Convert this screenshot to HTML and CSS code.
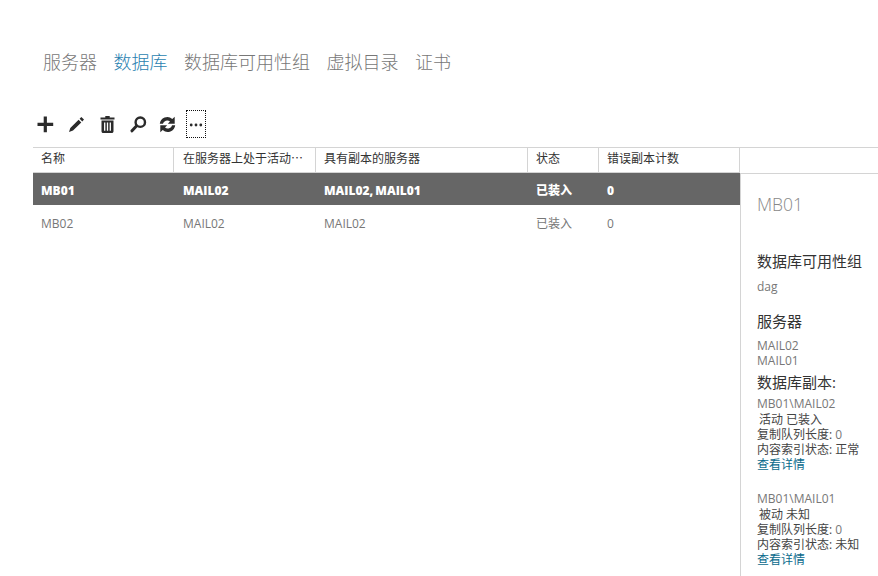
FILE: index.html
```html
<!DOCTYPE html>
<html lang="zh-CN">
<head>
<meta charset="utf-8">
<title>数据库</title>
<link rel="stylesheet" href="styles.css">
</head>
<body>
<nav class="tabs">
  <a class="tab">服务器</a>
  <a class="tab active">数据库</a>
  <a class="tab">数据库可用性组</a>
  <a class="tab">虚拟目录</a>
  <a class="tab">证书</a>
</nav>
<div class="toolbar">
  <button class="tool"><svg width="17" height="17" viewBox="0 0 17 17"><path d="M6.700 .5h3.200v6.300h6.300v3.200H9.900v6.300H6.700V10H.5V6.800h6.200z" fill="#2b2b2b"/></svg></button>
  <button class="tool"><svg width="17" height="17" viewBox="0 0 17 17"><path d="M13.300 1l2.700 2.600-1.700 1.800-2.700-2.700zM10.600 3.700l2.700 2.700-8.300 8.200-4 1.400 1.300-4z" fill="#2b2b2b"/></svg></button>
  <button class="tool"><svg width="17" height="17" viewBox="0 0 17 17"><path d="M6.300 0h4.400v1.500h4.800v2H1.500v-2h4.800zM2.500 4.500h12v10.700c0 1-.7 1.800-1.700 1.800H4.200c-1 0-1.700-.8-1.700-1.800z" fill="#2b2b2b"/><path d="M5.700 6.500v8.300M8.500 6.500v8.300M11.300 6.500v8.300" stroke="#fff" stroke-width="1.300"/></svg></button>
  <button class="tool"><svg width="17" height="17" viewBox="0 0 17 17"><circle cx="10.300" cy="6.200" r="4.700" fill="none" stroke="#2b2b2b" stroke-width="2.400"/><path d="M6.700 9.800L2 14.800" stroke="#2b2b2b" stroke-width="3" stroke-linecap="round"/></svg></button>
  <button class="tool refresh"><svg width="17" height="17" viewBox="0 0 17 17"><path d="M.8 7.800A7.500 7.500 0 0 1 13.300 3L15.700 .8v7H8.800l2.200-2.300A4.400 4.400 0 0 0 3.900 7.800z" fill="#2b2b2b"/><path d="M16.200 9.200A7.500 7.500 0 0 1 3.700 14L1.300 16.200v-7h6.900L6 11.500A4.400 4.400 0 0 0 13.100 9.200z" fill="#2b2b2b"/></svg></button>
  <button class="tool more"><svg width="14" height="4" viewBox="0 0 14 4"><circle cx="2.200" cy="2" r="1.400" fill="#2b2b2b"/><circle cx="7" cy="2" r="1.400" fill="#2b2b2b"/><circle cx="11.800" cy="2" r="1.400" fill="#2b2b2b"/></svg></button>
</div>
<main class="content">
  <section class="list">
    <div class="row head">
      <div class="cell">名称</div>
      <div class="cell">在服务器上处于活动⋯</div>
      <div class="cell">具有副本的服务器</div>
      <div class="cell">状态</div>
      <div class="cell">错误副本计数</div>
    </div>
    <div class="row selected">
      <div class="cell">MB01</div>
      <div class="cell">MAIL02</div>
      <div class="cell">MAIL02, MAIL01</div>
      <div class="cell">已装入</div>
      <div class="cell">0</div>
    </div>
    <div class="row item">
      <div class="cell">MB02</div>
      <div class="cell">MAIL02</div>
      <div class="cell">MAIL02</div>
      <div class="cell">已装入</div>
      <div class="cell">0</div>
    </div>
  </section>
  <aside class="side">
    <div class="side-head"></div>
    <div class="details">
      <h1 class="title">MB01</h1>
      <h2 class="label dag-label">数据库可用性组</h2>
      <p class="muted dag">dag</p>
      <h2 class="label">服务器</h2>
      <p class="muted servers">MAIL02<br>MAIL01</p>
      <h2 class="label copies">数据库副本:</h2>
      <div class="copy">
        <p class="muted">MB01\MAIL02</p>
        <p class="line indent">活动 已装入</p>
        <p class="line">复制队列长度: <span class="muted">0</span></p>
        <p class="line">内容索引状态: 正常</p>
        <a class="link">查看详情</a>
      </div>
      <div class="copy">
        <p class="muted">MB01\MAIL01</p>
        <p class="line indent">被动 未知</p>
        <p class="line">复制队列长度: <span class="muted">0</span></p>
        <p class="line">内容索引状态: 未知</p>
        <a class="link">查看详情</a>
      </div>
    </div>
  </aside>
</main>
</body>
</html>
```
FILE: styles.css
```css
* { box-sizing: border-box; }
html, body { margin: 0; height: 100%; overflow: hidden; }
body {
  background: #fff;
  color: #333;
  font-family: "Open Sans", "Noto Sans CJK SC", sans-serif;
  font-size: 12px;
  width: 878px;
  height: 576px;
  display: flex;
  flex-direction: column;
}
p, h1, h2 { margin: 0; font-weight: 400; }
.tabs {
  display: flex;
  gap: 16.5px;
  padding: 50px 0 0 43px;
  height: 110px;
  font-size: 18px;
  line-height: 25px;
  font-weight: 300;
  color: #777;
}
.tab.active { color: #2a7fb0; }
.toolbar {
  display: flex;
  align-items: center;
  padding-left: 37px;
  height: 28px;
  gap: 14px;
}
.tool {
  width: 17px;
  height: 17px;
  padding: 0;
  border: 0;
  background: none;
  display: flex;
  align-items: center;
  justify-content: center;
}
.refresh { margin-left: -2px; }
.more {
  width: 20px;
  height: 28px;
  border: 1px dotted #111;
  margin-left: -4px;
  padding-top: 2px;
}
.content { display: flex; flex: 1; min-height: 0; margin-top: 9px; padding-left: 33px; }
.list { width: 707px; }
.row {
  display: grid;
  grid-template-columns: 141px 142px 212px 71px 141px;
}
.cell { padding-left: 8px; white-space: nowrap; overflow: hidden; }
.cell:nth-child(2) { padding-left: 9px; }
.head {
  height: 26px;
  border-top: 1px solid #d4d4d4;
  border-bottom: 1px solid #d4d4d4;
  line-height: 21px;
  color: #333;
}
.head .cell { border-right: 1px solid #d4d4d4; }
.selected {
  height: 32px;
  background: #666;
  color: #fff;
  font-weight: 800;
  line-height: 35px;
}
.selected .cell:nth-child(3) { word-spacing: -1px; }
.item { height: 36px; line-height: 37px; color: #777; }
.side { flex: 1; min-width: 0; }
.side-head { height: 27px; border-top: 1px solid #d4d4d4; border-bottom: 1px solid #d4d4d4; }
.details {
  height: 402px;
  padding: 18px 0 0 16px;
  border-left: 1px solid #d4d4d4;
  overflow: hidden;
  white-space: nowrap;
}
.title { font-size: 17.5px; line-height: 25px; color: #888; font-weight: 300; }
.label { font-size: 15px; line-height: 20px; color: #333; }
.dag-label { margin-top: 34px; }
.muted { color: #777; }
.dag { margin-top: 8px; line-height: 16px; margin-bottom: 16px; }
.servers { margin-top: 7px; line-height: 15px; }
.copies { margin-top: 4px; }
.copy { margin-top: 4px; margin-bottom: 19px; line-height: 15px; }
.copy > .muted { line-height: 16px; }
.line { color: #444; }
.indent { padding-left: 2px; }
.link { color: #0a6a8c; display: block; }
```
